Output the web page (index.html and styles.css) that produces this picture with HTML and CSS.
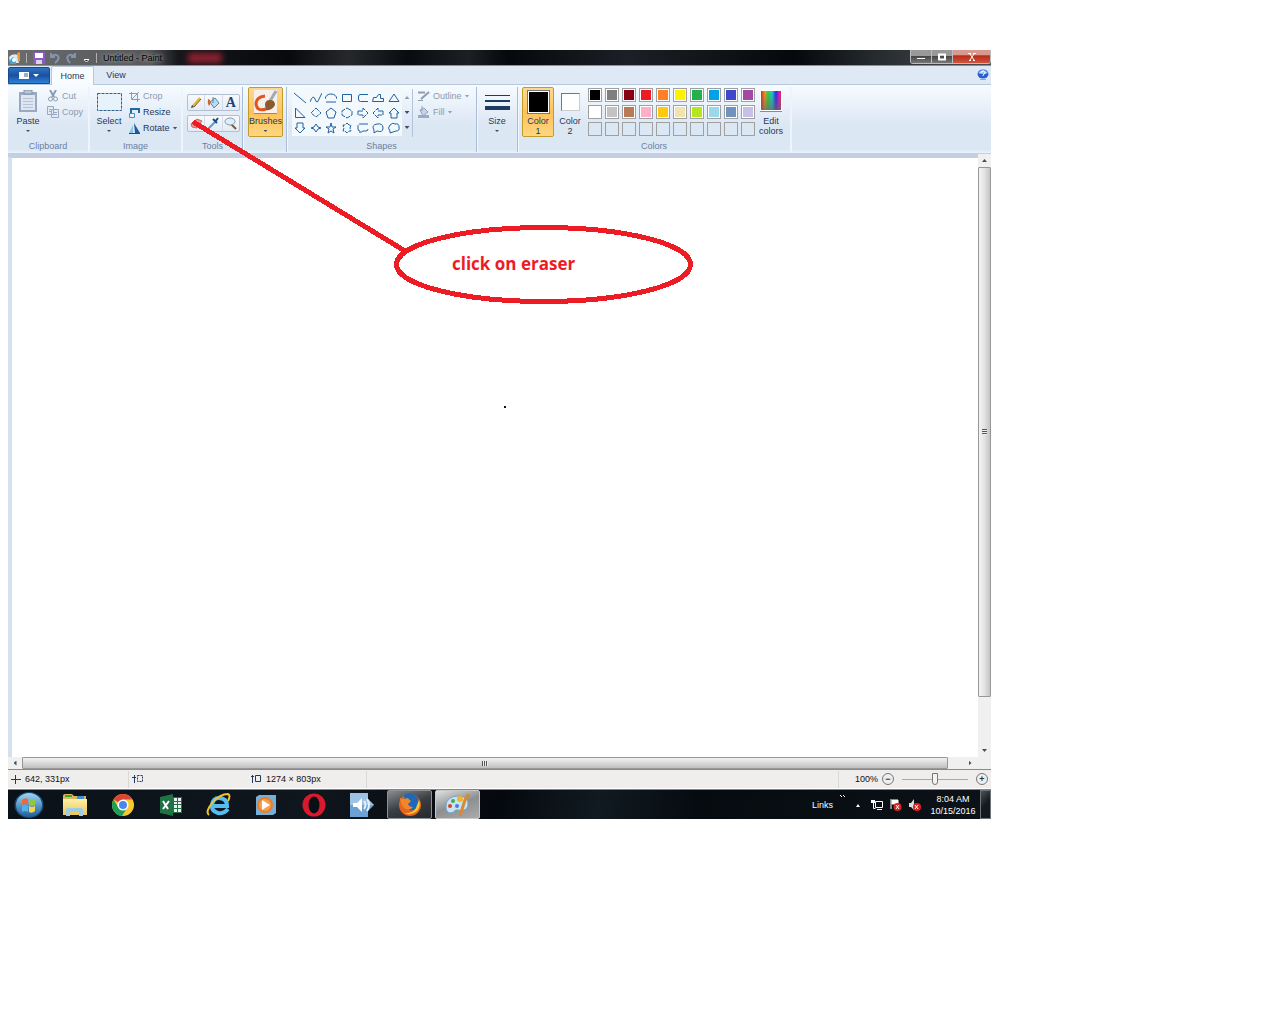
FILE: index.html
```
<!DOCTYPE html>
<html lang="en">
<head>
<meta charset="utf-8">
<title>Untitled - Paint</title>
<link rel="stylesheet" href="styles.css">
</head>
<body>
<svg class="defs" aria-hidden="true">
  <defs>
    <linearGradient id="sky" x1="0" y1="0" x2="0" y2="1"><stop offset="0" stop-color="#9dd4f2"/><stop offset="1" stop-color="#1b5f9e"/></linearGradient>
    <linearGradient id="gold" x1="0" y1="0" x2="0" y2="1"><stop offset="0" stop-color="#fff0a8"/><stop offset="1" stop-color="#e9c65a"/></linearGradient>
    <linearGradient id="rainbow"><stop offset="0" stop-color="#f02020"/><stop offset=".2" stop-color="#e8a020"/><stop offset=".35" stop-color="#30d030"/><stop offset=".55" stop-color="#10d0d8"/><stop offset=".75" stop-color="#3020e8"/><stop offset=".9" stop-color="#e010d0"/><stop offset="1" stop-color="#f02040"/></linearGradient>
    <linearGradient id="fade" x1="0" y1="0" x2="0" y2="1"><stop offset="0" stop-color="#666" stop-opacity="0"/><stop offset="1" stop-color="#666" stop-opacity=".7"/></linearGradient>
  </defs>
</svg>
<main class="window">
  <header class="titlebar">
    <svg class="appicon" width="14" height="14" viewBox="0 0 14 14"><path d="M1 6Q4 2 10 4L11 12H2Z" fill="#d7ecf7"/><path d="M2 9l3-3 3 3v4H2z" fill="#4aa3d8"/><circle cx="6" cy="9" r="2" fill="#fff"/><path d="M9 2l3-1v9l-2 1z" fill="#e99a35"/></svg>
    <span class="rule"></span>
    <button class="qa" aria-label="Save"><svg width="12" height="12" viewBox="0 0 12 12"><path d="M0 0h12v12H0z" fill="#8a5bc0"/><path d="M2 1h8v5H2z" fill="#fff"/><path d="M3 8h6v4H3z" fill="#d9d3ee"/></svg></button>
    <button class="qa" aria-label="Undo"><svg width="12" height="12" viewBox="0 0 12 12"><path d="M2 1v4h4M2 5Q6 1 9 4Q11 7 6 11" fill="none" stroke="#8494b0" stroke-width="2"/></svg></button>
    <button class="qa" aria-label="Redo"><svg width="12" height="12" viewBox="0 0 12 12"><path d="M10 1v4H6M10 5Q6 1 3 4Q1 7 5 11" fill="none" stroke="#8494b0" stroke-width="2"/></svg></button>
    <button class="qa" aria-label="Customize toolbar"><svg width="6" height="12" viewBox="0 0 6 12"><path d="M0 7h5v1L3 10H2L0 8z" fill="#fff"/><path d="M1 8h3L2.500 9.500z" fill="#111"/></svg></button>
    <span class="rule"></span>
    <h1 class="title">Untitled - Paint</h1>
    <span class="reflection"></span>
    <div class="caption">
      <button aria-label="Minimize"><svg width="10" height="8" viewBox="0 0 10 8"><path d="M1 5h8v1H1z" fill="#fff"/></svg></button>
      <button aria-label="Maximize"><svg width="10" height="8" viewBox="0 0 10 8"><path d="M2 1.500h6v5H2z" fill="none" stroke="#fff" stroke-width="2"/></svg></button>
      <button class="close" aria-label="Close"><svg width="10" height="8" viewBox="0 0 10 8"><path d="M3 1l4 6M7 1L3 7M1 .5h3M6 .5h3M2 7.500h2M6 7.500h2" stroke="#fff"/></svg></button>
    </div>
  </header>

  <nav class="tabs">
    <button class="file" aria-label="Paint menu"><svg width="22" height="9" viewBox="0 0 22 9"><path d="M1 1h10v7H1z" fill="#fff"/><path d="M6 3h4M6 5h4" stroke="#2a5fae"/><path d="M15 3h6l-3 3z" fill="#fff"/></svg></button>
    <button class="tab active">Home</button>
    <button class="tab">View</button>
    <button class="help" aria-label="Help"><svg width="12" height="12" viewBox="0 0 12 12"><ellipse cx="6" cy="5" rx="5.500" ry="4.500" fill="#2460d4"/><path d="M1 4Q6-2 11 4Q6 6 1 4" fill="#9cc4f8"/><path d="M4 4Q4 2 6 2T8 4Q8 5 6 6V7" fill="none" stroke="#fff"/><path d="M3 10h6v1H3z" fill="#8fa8d0"/></svg></button>
  </nav>

  <section class="ribbon">
    <div class="group clipboard">
      <div class="tools">
        <button class="big"><span class="pic"><svg width="20" height="24" viewBox="0 0 20 24"><path d="M1 2h18v20H1z" fill="#9aa9c2"/><path d="M3 5h14v15H3z" fill="#dfe6f2"/><path d="M6 0h8v4H6z" fill="#b8c4d8" stroke="#8292ae"/><path d="M5 8.500h10M5 11.500h10M5 14.500h10M5 17.500h10" stroke="#b6c2d8"/></svg></span>Paste<i class="arrow"></i></button>
        <div class="stack">
          <button disabled><svg width="12" height="12" viewBox="0 0 12 12"><path d="M3 0l4 7M9 0L5 7" stroke="#8d9bb2" stroke-width="2"/><circle cx="3.500" cy="9" r="2" fill="none" stroke="#8d9bb2"/><circle cx="8.500" cy="9" r="2" fill="none" stroke="#8d9bb2"/></svg>Cut</button>
          <button disabled><svg width="12" height="12" viewBox="0 0 12 12"><path d="M.5.5h6v8h-6zM4.500 3.500h7v8h-7z" fill="#e4eaf4" stroke="#9aa8c0"/><path d="M6 6.500h4M6 8.500h4M2 3.500h2M2 5.500h2" stroke="#9aa8c0"/></svg>Copy</button>
        </div>
      </div>
      <h2>Clipboard</h2>
    </div>

    <div class="group image">
      <div class="tools">
        <button class="big"><span class="pic"><svg width="25" height="24" viewBox="0 0 25 24"><path d="M.5 3.500h24v17H.5z" fill="#e8f2fb" stroke="#2c5f96" stroke-dasharray="3 1"/></svg></span>Select<i class="arrow"></i></button>
        <div class="stack">
          <button disabled><svg width="11" height="11" viewBox="0 0 11 11"><path d="M2.500 1v7.500H11M0 2.500h8.500V11M3 8l7-7" fill="none" stroke="#8f9cb4"/></svg>Crop</button>
          <button><svg width="11" height="11" viewBox="0 0 11 11"><path d="M2 6V2h8v4" fill="none" stroke="#1d6aa5" stroke-width="2"/><path d="M.5 6.500h5v4h-5z" fill="#e8f4fc" stroke="#3a96cc"/></svg>Resize</button>
          <button><svg width="11" height="11" viewBox="0 0 11 11"><path d="M5 0l6 10H6z" fill="#1c5f9c"/><path d="M4 2v8H0z" fill="#8cc5e8"/><path d="M0 10.500h11" stroke="#19518a"/></svg>Rotate<i class="arrow"></i></button>
        </div>
      </div>
      <h2>Image</h2>
    </div>

    <div class="group toolset">
      <div class="tools">
        <div class="triple">
          <button aria-label="Pencil"><svg width="13" height="13" viewBox="0 0 13 13"><path d="M3 10L10 2" stroke="#e3b12f" stroke-width="2"/><path d="M1 12l1-3 2 2z" fill="#333"/><path d="M4 11l7-8" stroke="#735a28"/></svg></button>
          <button aria-label="Fill with color"><svg width="13" height="13" viewBox="0 0 13 13"><path d="M3 6l5-4 4 5-5 5z" fill="#b9dcf0" stroke="#4f88b2"/><path d="M1 3Q0 7 2 10Q4 8 3 4z" fill="#d6622d"/><path d="M6 7V1" stroke="#6a7c90"/></svg></button>
          <button aria-label="Text"><span class="letter">A</span></button>
        </div>
        <div class="triple">
          <button aria-label="Eraser"><svg width="13" height="13" viewBox="0 0 13 13"><path d="M1 7l6-5 5 2-5 7-5-1z" fill="#ea9696" stroke="#c86a6a"/></svg></button>
          <button aria-label="Color picker"><svg width="13" height="13" viewBox="0 0 13 13"><path d="M1 12l7-7" stroke="#5b9ccc" stroke-width="2"/><path d="M6 2l4 4M8 5l3-4" stroke="#1d4a80" stroke-width="2"/></svg></button>
          <button aria-label="Magnifier"><svg width="13" height="13" viewBox="0 0 13 13"><path d="M7 7l5 5" stroke="#7a5b3c" stroke-width="2"/><ellipse cx="6" cy="4.500" rx="5" ry="3.500" fill="#deeefa" stroke="#8797ad"/></svg></button>
        </div>
      </div>
      <h2>Tools</h2>
    </div>

    <div class="group brush">
      <div class="tools">
        <button class="big chosen"><span class="pic"><svg width="23" height="24" viewBox="0 0 23 24"><path d="M0 0h23v24H0z" fill="#f5f0ec"/><path d="M0 23.500h23" stroke="#a08a60"/><path d="M11 6Q2 7 2 14Q3 22 12 19" fill="none" stroke="#e2541d" stroke-width="3"/><path d="M22 1l-6 10" stroke="#9eabb8" stroke-width="3"/><path d="M11 15q0-5 5-5t5 5q-3 6-9 5z" fill="#8c5a2e"/></svg></span>Brushes<i class="arrow"></i></button>
      </div>
    </div>

    <div class="group shapes">
      <div class="tools">
        <div class="gallery">
          <button aria-label="Line"><svg viewBox="0 0 12 12"><path d="M0 1l12 10"/></svg></button>
          <button aria-label="Curve"><svg viewBox="0 0 12 12"><path d="M0 10Q3 2 5 7T8 9L12 1"/></svg></button>
          <button aria-label="Oval"><svg viewBox="0 0 12 12"><path d="M0 7Q1 2 6 2T12 7M1 10h10"/></svg></button>
          <button aria-label="Rectangle"><svg viewBox="0 0 12 12"><path d="M1.500 2.500h9v7h-9z"/></svg></button>
          <button aria-label="Rounded rectangle"><svg viewBox="0 0 12 12"><path d="M11 2.500H3Q1.500 2.500 1.500 5v2q0 2.500 2 2.500H11"/></svg></button>
          <button aria-label="Polygon"><svg viewBox="0 0 12 12"><path d="M.5 9.500l1-4h3l2-3h2v4h3v3z"/></svg></button>
          <button aria-label="Triangle"><svg viewBox="0 0 12 12"><path d="M6 2l5 7.500H1z"/></svg></button>
          <button aria-label="Right triangle"><svg viewBox="0 0 12 12"><path d="M1.500 1v9.500H11z"/></svg></button>
          <button aria-label="Diamond"><svg viewBox="0 0 12 12"><path d="M6 1l5 5-5 4-5-4z" stroke-dasharray="4 1"/></svg></button>
          <button aria-label="Pentagon"><svg viewBox="0 0 12 12"><path d="M6 1l5 4-2 6H3L1 5z"/></svg></button>
          <button aria-label="Hexagon"><svg viewBox="0 0 12 12"><path d="M6 1l5 3v4l-5 3-5-3V4z" stroke-dasharray="5 1"/></svg></button>
          <button aria-label="Right arrow"><svg viewBox="0 0 12 12"><path d="M1 4h5V1l5 5-5 5V8H1z" stroke-dasharray="5 1"/></svg></button>
          <button aria-label="Left arrow"><svg viewBox="0 0 12 12"><path d="M11 4H6V1L1 6l5 5V8h5z" stroke-dasharray="5 1"/></svg></button>
          <button aria-label="Up arrow"><svg viewBox="0 0 12 12"><path d="M3 11V6H1l5-5 5 5H9v5z"/></svg></button>
          <button aria-label="Down arrow"><svg viewBox="0 0 12 12"><path d="M3 1v5H1l5 5 5-5H9V1z"/></svg></button>
          <button aria-label="Four-point star"><svg viewBox="0 0 12 12"><path d="M6 2l2 3 3 1-3 1-2 3-2-3-3-1 3-1z"/></svg></button>
          <button aria-label="Five-point star"><svg viewBox="0 0 12 12"><path d="M6 1l1 4h4L8 7l1 4-3-2-3 2 1-4-3-2h4z"/></svg></button>
          <button aria-label="Six-point star"><svg viewBox="0 0 12 12"><path d="M6 1l2 2h2L9 6l1 3H8l-2 2-2-2H2l1-3-1-3h2z" stroke-dasharray="4 1"/></svg></button>
          <button aria-label="Rounded callout"><svg viewBox="0 0 12 12"><path d="M11 2H3Q1 2 1 4v3q0 2 2 2v2l3-2h3q2 0 2-2" stroke-dasharray="9 1"/></svg></button>
          <button aria-label="Oval callout"><svg viewBox="0 0 12 12"><path d="M2 8Q-1 3 5 2t6 4-6 3l-3 2z"/></svg></button>
          <button aria-label="Cloud callout"><svg viewBox="0 0 12 12"><path d="M2 9Q-1 6 2 3q3-3 5-1 4-1 4 3 1 4-3 4l-3 1-3 1z"/></svg></button>
        </div>
        <div class="spin">
          <button aria-label="Scroll up"><i class="arrow up"></i></button>
          <button aria-label="Scroll down"><i class="arrow"></i></button>
          <button aria-label="More shapes"><i class="arrow"></i></button>
        </div>
        <div class="stack">
          <button disabled><svg width="12" height="12" viewBox="0 0 12 12"><path d="M0 2.500h7M3 9L11 2" stroke="#8e9bb3" stroke-width="2"/><path d="M0 10.500h5" stroke="#8e9bb3"/></svg>Outline<i class="arrow"></i></button>
          <button disabled><svg width="12" height="12" viewBox="0 0 12 12"><path d="M0 9h11v3H0z" fill="#9aabc9"/><path d="M2 4l4-2 4 4-5 4z" fill="#c8d2e3" stroke="#93a1ba"/><path d="M4 5V0" stroke="#93a1ba"/></svg>Fill<i class="arrow"></i></button>
        </div>
      </div>
      <h2>Shapes</h2>
    </div>

    <div class="group size">
      <div class="tools">
        <button class="big"><span class="pic"><svg width="25" height="24" viewBox="0 0 25 24"><path d="M0 5h25v1H0zM0 10h25v2H0zM0 16h25v4H0z" fill="#1f3b64"/></svg></span>Size<i class="arrow"></i></button>
      </div>
    </div>

    <div class="group colors">
      <div class="tools">
        <button class="big chosen"><span class="pic"><b class="chip black"></b></span>Color<br>1</button>
        <button class="big second"><span class="pic"><b class="chip white"></b></span>Color<br>2</button>
        <div class="palette">
          <button aria-label="Black" style="background:#000000"></button>
          <button aria-label="Gray" style="background:#7f7f7f"></button>
          <button aria-label="Dark red" style="background:#880015"></button>
          <button aria-label="Red" style="background:#ed1c24"></button>
          <button aria-label="Orange" style="background:#ff7f27"></button>
          <button aria-label="Yellow" style="background:#fff200"></button>
          <button aria-label="Green" style="background:#22b14c"></button>
          <button aria-label="Turquoise" style="background:#00a2e8"></button>
          <button aria-label="Indigo" style="background:#3f48cc"></button>
          <button aria-label="Purple" style="background:#a349a4"></button>
          <button aria-label="White" style="background:#ffffff"></button>
          <button aria-label="Light gray" style="background:#c3c3c3"></button>
          <button aria-label="Brown" style="background:#b97a57"></button>
          <button aria-label="Rose" style="background:#ffaec9"></button>
          <button aria-label="Gold" style="background:#ffc90e"></button>
          <button aria-label="Light yellow" style="background:#efe4b0"></button>
          <button aria-label="Lime" style="background:#b5e61d"></button>
          <button aria-label="Light turquoise" style="background:#99d9ea"></button>
          <button aria-label="Blue gray" style="background:#7092be"></button>
          <button aria-label="Lavender" style="background:#c8bfe7"></button>
          <button class="empty" aria-label="Custom 1"></button><button class="empty" aria-label="Custom 2"></button><button class="empty" aria-label="Custom 3"></button><button class="empty" aria-label="Custom 4"></button><button class="empty" aria-label="Custom 5"></button><button class="empty" aria-label="Custom 6"></button><button class="empty" aria-label="Custom 7"></button><button class="empty" aria-label="Custom 8"></button><button class="empty" aria-label="Custom 9"></button><button class="empty" aria-label="Custom 10"></button>
        </div>
        <button class="big"><span class="pic"><svg width="22" height="22" viewBox="0 0 22 22"><path d="M0 0h22v22H0z" fill="#fff"/><path d="M0 21.500h22" stroke="#8a8a8a"/><path d="M1 1h20v19H1z" fill="url(#rainbow)"/><path d="M1 1h20v19H1z" fill="url(#fade)"/></svg></span>Edit<br>colors</button>
      </div>
      <h2>Colors</h2>
    </div>
  </section>

  <section class="workspace">
    <div class="canvas"><span class="dot"></span></div>
    <div class="vscroll">
      <button aria-label="Scroll up"><i class="arrow up"></i></button>
      <div class="thumb"></div>
      <button aria-label="Scroll down"><i class="arrow"></i></button>
    </div>
    <div class="hscroll">
      <button aria-label="Scroll left"><i class="arrow left"></i></button>
      <div class="thumb"></div>
      <button aria-label="Scroll right"><i class="arrow right"></i></button>
    </div>
    <div class="corner"></div>
  </section>

  <footer class="status">
    <span class="cell"><svg width="10" height="10" viewBox="0 0 10 10"><path d="M0 5.500h10M4.500 1v9" stroke="#1f3b64"/></svg>642, 331px</span>
    <span class="cell"><svg width="11" height="10" viewBox="0 0 11 10"><path d="M2.500 1v8M0 3.500h4" stroke="#1f3b64"/><path d="M5.500 1.500h5v6h-5z" fill="none" stroke="#1f3b64" stroke-dasharray="2 1"/></svg></span>
    <span class="cell"><svg width="11" height="10" viewBox="0 0 11 10"><path d="M1.500 1v8M0 2.500h3" stroke="#1f3b64"/><path d="M4.500 1.500h5v6h-5z" fill="none" stroke="#1f3b64"/></svg>1274 × 803px</span>
    <label class="zoom" for="zoom">100%</label>
    <button class="round" aria-label="Zoom out">−</button>
    <input id="zoom" type="range" min="0" max="100" value="50">
    <button class="round plus" aria-label="Zoom in">+</button>
  </footer>

  <nav class="taskbar">
    <button class="start" aria-label="Start"><svg width="30" height="28" viewBox="0 0 30 28"><ellipse cx="15" cy="14" rx="14.500" ry="13" fill="#184a78"/><ellipse cx="15" cy="14" rx="13" ry="12" fill="url(#sky)"/><path d="M8 9q3-3 6-1v6q-3-2-6 0z" fill="#f0693a"/><path d="M15 8q3 2 7 0l-1 6q-3 2-6 0z" fill="#93c83e"/><path d="M8 15q3-2 6 0v6q-3-2-6 0z" fill="#4fb3ea"/><path d="M15 15q3 2 6 0v5q-3 3-6 1z" fill="#fbd34a"/></svg></button>
    <div class="apps">
      <button aria-label="Explorer"><svg width="26" height="24" viewBox="0 0 26 24"><path d="M1 3q0-2 2-2h7l2 2h12v19H1z" fill="#d8b75e"/><path d="M3 2h7v2H3z" fill="#3aa635"/><path d="M15 3h7v3h-7z" fill="#3d8fd8"/><path d="M1 6h24v16H1z" fill="url(#gold)"/><path d="M4 23v-6q0-2 2-2h13q2 0 2 2v6h-4v-4H8v4z" fill="#9ccce8"/></svg></button>
      <button aria-label="Chrome"><svg width="24" height="24" viewBox="0 0 24 24"><circle cx="12" cy="12" r="11" fill="#f7c92e"/><path d="M12 12L2.500 6.500A11 11 0 0 1 21.500 6.500H12z" fill="#db4437"/><path d="M2.500 6.500A11 11 0 0 0 11 23L16 15 7 14z" fill="#1c9f57"/><circle cx="12" cy="12" r="5.500" fill="#fff"/><circle cx="12" cy="12" r="4" fill="#4a84ee"/></svg></button>
      <button aria-label="Excel"><svg width="24" height="22" viewBox="0 0 24 22"><path d="M13 3h10v16H13z" fill="#1f7244"/><path d="M15 4h3v3h-3zM19 4h3v3h-3zM15 8h3v2h-3zM19 8h3v2h-3zM15 11h3v3h-3zM19 11h3v3h-3zM15 15h3v3h-3zM19 15h3v3h-3z" fill="#e8f1eb"/><path d="M1 3l13-3v22L1 19z" fill="#1f7244"/><path d="M4 7l5 8M10 7l-6 8" stroke="#fff" stroke-width="2"/></svg></button>
      <button aria-label="Internet Explorer"><svg width="26" height="24" viewBox="0 0 26 24"><path d="M22 16Q18 21 12 20Q5 18 6 12Q7 5 13 5Q21 5 21 13H8" fill="none" stroke="#55bdf0" stroke-width="4"/><path d="M3 22Q-1 19 6 10Q14 1 22 1Q25 2 22 8" fill="none" stroke="#f0c22b" stroke-width="2"/></svg></button>
      <button aria-label="Media Player"><svg width="22" height="22" viewBox="0 0 22 22"><path d="M1 3l3-2h17v18l-3 2H1z" fill="#74b0d8"/><circle cx="10" cy="11" r="8" fill="#ee7c25"/><circle cx="10" cy="11" r="6" fill="#f5a04e"/><path d="M7 6l8 5-8 5z" fill="#fff"/></svg></button>
      <button aria-label="Opera"><svg width="24" height="24" viewBox="0 0 24 24"><ellipse cx="12" cy="12" rx="11.500" ry="11.500" fill="#d9192c"/><ellipse cx="12" cy="12" rx="5.500" ry="8.500" fill="#0a0e15"/></svg></button>
      <button aria-label="Volume"><svg width="26" height="24" viewBox="0 0 26 24"><path d="M1 0h18v6l6 6-6 6v6H1z" fill="#6ca1d4"/><path d="M1 0h18v6l6 6H1z" fill="#9cc2e5"/><path d="M4 10h4l5-5v14l-5-5H4z" fill="#fff"/><path d="M15 8q3 4 0 8M18 6q4 6 0 12" fill="none" stroke="#e7f1fb" stroke-width="2"/></svg></button>
      <button class="open" aria-label="Firefox"><svg width="24" height="24" viewBox="0 0 24 24"><circle cx="12" cy="12" r="11" fill="#e8641b"/><path d="M6 2Q14-2 20 5Q23 13 16 17Q8 19 7 11z" fill="#1f68b8"/><path d="M2 5l4 1 4-1q1 2 3 3l-3 3q1 3 5 3-3 4-7 2-5-2-6-11z" fill="#f0862a"/><path d="M21 7q2 6-2 11-6 5-13 2 9 1 12-5z" fill="#fbc936"/></svg></button>
      <button class="open current" aria-label="Paint"><svg width="26" height="24" viewBox="0 0 26 24"><path d="M1 15Q0 3 14 3Q24 4 23 12Q22 19 13 17Q10 16 9 19Q2 22 1 15z" fill="#c8e3f3" stroke="#6fa6c9"/><circle cx="5" cy="13" r="2" fill="#d94136"/><circle cx="8" cy="8" r="2" fill="#4aa84e"/><circle cx="15" cy="6" r="3" fill="#f0b52a"/><circle cx="12" cy="13" r="2" fill="#4c7edb"/><path d="M24 1l-4 6-5 16" fill="none" stroke="#d68a35" stroke-width="3"/></svg></button>
    </div>
    <div class="tray">
      <a class="links" href="#links">Links</a>
      <svg class="chev" width="6" height="24" viewBox="0 0 6 24"><path d="M0 2l2 2M3 2l2 2" stroke="#fff"/></svg>
      <button aria-label="Show hidden icons"><svg width="6" height="12" viewBox="0 0 6 12"><path d="M1 8h4L3 5z" fill="#fff"/></svg></button>
      <button aria-label="Network"><svg width="12" height="12" viewBox="0 0 12 12"><path d="M4.500 2.500h7v6h-7zM6 10.500h5M2.500 1v8.500h2" fill="none" stroke="#fff"/><path d="M0 1h4v3H0z" fill="#fff"/></svg></button>
      <button aria-label="Action Center"><svg width="12" height="12" viewBox="0 0 12 12"><path d="M1 0v10M2 1h6v4H2z" fill="#fff" stroke="#fff"/><circle cx="7.500" cy="8" r="4" fill="#d9221f"/><path d="M6 6l3 4M9 6l-3 4" stroke="#fff"/></svg></button>
      <button aria-label="Sound muted"><svg width="12" height="12" viewBox="0 0 12 12"><path d="M0 4h2l3-4v11L2 8H0z" fill="#ddd"/><circle cx="8" cy="8" r="4" fill="#d9221f"/><path d="M6 6l3 4M9 6l-3 4" stroke="#fff"/></svg></button>
      <time class="clock" datetime="2016-10-15T08:04">8:04 AM<br>10/15/2016</time>
      <button class="desktop" aria-label="Show desktop"></button>
    </div>
  </nav>

  <aside class="callout">
    <svg width="690" height="260" viewBox="0 0 690 260" aria-hidden="true"><path d="M187 73L397 201"/><ellipse cx="535.500" cy="214.500" rx="147" ry="37"/></svg>
    <p>click on eraser</p>
  </aside>
</main>
</body>
</html>
```
FILE: styles.css
```
* { box-sizing: border-box; }
body {
  margin: 0;
  padding: 50px 289px 0 8px;
  background: #fff;
  color: #1e395b;
  font: 9px/10px "Liberation Sans", Arial, sans-serif;
}
button {
  margin: 0;
  padding: 0;
  border: 0;
  background: none;
  color: inherit;
  font: inherit;
}
h1, h2, p { margin: 0; font: inherit; }
svg { display: block; flex: none; }
.defs { position: absolute; width: 0; height: 0; }

.window {
  position: relative;
  display: flex;
  flex-direction: column;
  min-width: 800px;
  min-height: calc(75vh + 1px);
}

/* title bar */
.titlebar {
  display: flex;
  align-items: center;
  height: 16px;
  overflow: hidden;
  background: linear-gradient(90deg, #6c6c6c 0, #55575a 140px, #15171b 170px, #07090d 280px, #26282b 340px, #080b10 400px, #1c2024 460px, #05080c 500px, #1c2026 620px, #05080c 80%, #252a2e 88%, #4a4d50 100%);
  border-bottom: 1px solid #8b9199;
}
.rule { width: 1px; height: 10px; background: #b0b0b0; }
.rule:first-of-type { margin: 0 5px 0 4px; }
.qa { display: grid; place-items: center; width: 14px; margin-right: 2px; }
.title { margin: 0 26px 0 6px; color: #000; text-shadow: 0 0 4px #bbb, 0 0 6px #999; }
.reflection { width: 34px; height: 10px; background: #8e2230; filter: blur(3px); }
.caption { display: flex; align-self: flex-start; margin-left: auto; height: 14px; border: 1px solid #b9bcc0; border-top: 0; border-radius: 0 0 3px 3px; overflow: hidden; }
.caption button { display: grid; place-items: center; width: 21px; background: linear-gradient(#999 0 45%, #444 46%, #777); border-right: 1px solid #b9bcc0; }
.caption .close { width: 37px; border: 0; background: linear-gradient(#d89a90 0 35%, #b92c18 45%, #d0533c); }

/* tabs */
.tabs { display: flex; align-items: flex-end; height: 19px; background: #dfe9f5; border-bottom: 1px solid #b8c8dd; }
.file { display: grid; place-items: center; width: 42px; height: 17px; border: 1px solid #174a8c; border-radius: 2px 2px 0 0; background: linear-gradient(#2c73c4, #1c50a0 50%, #2c83d6); }
.tab { width: 44px; height: 18px; }
.tab.active { position: relative; width: 43px; margin: 0 0 -1px 1px; height: 19px; border: 1px solid #b8c8dd; border-bottom: 0; border-radius: 2px 2px 0 0; background: #f8fcff; }
.help { align-self: center; margin: 0 2px 0 auto; }

/* ribbon */
.ribbon { display: flex; height: 68px; padding: 2px 0 1px; background: linear-gradient(#f6fbff, #dce7f4 60%, #dce7f4 95%, #e8f4ff); }
.group { display: flex; flex-direction: column; flex: none; border-right: 2px solid #eef4fb; }
.group h2 { margin-top: auto; padding-bottom: 1px; color: #6a7f9f; text-align: center; }
.tools { display: flex; height: 50px; }
.clipboard { width: 82px; }
.image { width: 93px; }
.toolset { width: 60px; }
.brush { width: 44px; }
.shapes { width: 190px; }
.size { width: 41px; }
.colors { width: 274px; }
.toolset, .brush, .shapes, .size { border-right: 1px solid #a9bbd5; box-shadow: 1px 0 #f3f8fd; }
.big { display: flex; flex-direction: column; align-items: center; width: 32px; height: 50px; padding-top: 3px; text-align: center; }
.pic { display: grid; place-items: start center; height: 26px; }
.chosen { border: 1px solid #c29b29; border-radius: 2px; padding-top: 2px; background: linear-gradient(#fbd893, #fdc85f 45%, #fdbf57 46%, #ffd780); }
.arrow { display: block; width: 5px; height: 3px; margin: 0 auto; background: #3c4f6e; clip-path: polygon(0 0, 100% 0, 50% 100%); }
.big .arrow { margin-top: 4px; width: 4px; height: 2px; }
.arrow.up { clip-path: polygon(0 100%, 100% 100%, 50% 0); }
.arrow.left { width: 3px; height: 5px; clip-path: polygon(0 50%, 100% 0, 100% 100%); }
.arrow.right { width: 3px; height: 5px; clip-path: polygon(100% 50%, 0 0, 0 100%); }
.stack { display: flex; flex-direction: column; align-items: flex-start; padding-top: 1px; }
.stack button { display: flex; align-items: center; gap: 3px; height: 16px; white-space: nowrap; }
.stack button:disabled { color: #8d99ad; }
.stack button:disabled .arrow { opacity: .5; }
.clipboard .big { margin-left: 4px; }
.clipboard .stack { margin-left: 3px; }
.image .big { margin-left: 3px; }
.image .stack { margin-left: 4px; }

.toolset .tools { flex-direction: column; gap: 4px; padding: 7px 0 0 4px; }
.triple { display: flex; width: 53px; height: 17px; border: 1px solid #b3bfd2; border-radius: 2px; background: linear-gradient(#f7fafd, #e4ebf5); }
.triple button { display: grid; place-items: center; flex: 1; border-left: 1px solid #d4dcea; }
.triple button:first-child { border: 0; }
.letter { color: #22426f; font: bold 14px/14px "Liberation Serif", serif; }
.brush .big { width: 35px; margin-left: 5px; }

.gallery { display: grid; grid-template: repeat(3, 15px) / repeat(7, 1fr); place-items: center; width: 110px; height: 47px; padding-top: 1px; margin: 2px 0 0 5px; background: #f3f8fd; }
.gallery svg { width: 12px; height: 12px; fill: none; stroke: #1f62a2; stroke-width: 1; }
.spin { display: grid; grid-template-rows: repeat(3, 15px); width: 11px; margin-top: 2px; padding-top: 1px; border-right: 1px solid #b3c3da; align-items: center; }
.spin button:first-child { opacity: .5; }
.shapes .stack { margin-left: 5px; }
.size .big { margin-left: 4px; }

.chip { display: block; width: 23px; height: 24px; border: 1px solid #777; }
.chip.black { background: #000; box-shadow: inset 0 0 0 1px #fff; }
.chip.white { width: 19px; height: 18px; margin-top: 3px; background: #fff; border-right-color: #ccc; border-bottom-color: #ccc; }
.colors .chosen { margin-left: 4px; }
.colors .second { margin-right: 2px; }
.palette { display: grid; grid-template-columns: repeat(10, 14px); grid-auto-rows: 14px; gap: 3px; width: 167px; padding: 1px 0 0; }
.palette button { border: 1px solid #a0a0a0; box-shadow: inset 0 0 0 1px #fff; }
.palette .empty { background: #dce7f4; box-shadow: none; }

/* drawing area and scroll bars */
.workspace { display: grid; grid-template: 1fr 12px / 1fr 13px; flex: 1; padding-top: 4px; background: #c5cfe1; }
.canvas { background: #fff; border-left: 4px solid #d6e0ef; border-top: 1px solid #c5cfe1; }
.dot { display: block; width: 2px; height: 2px; margin: 248px 0 0 492px; background: #111; }
.vscroll, .hscroll { display: flex; background: #f0f0f0; }
.vscroll { flex-direction: column; margin-top: -3px; }
.vscroll button { height: 13px; }
.vscroll .thumb { flex: 0 1 530px; margin-bottom: auto; background: linear-gradient(90deg, #f4f4f4, #e2e2e2 50%, #c4c4c8); border: 1px solid #979797; border-radius: 1px; display: grid; place-items: center; }
.vscroll .thumb::after { content: ""; width: 5px; height: 6px; background: repeating-linear-gradient(#555 0 1px, #eee 1px 2px); }
.hscroll button { width: 14px; }
.hscroll .thumb { flex: 1; border: 1px solid #979797; border-radius: 1px; background: linear-gradient(#f2f2f2, #d9d9d9 50%, #bfbfc3); display: grid; place-items: center; }
.hscroll .thumb::after { content: ""; width: 6px; height: 5px; background: repeating-linear-gradient(90deg, #555 0 1px, #eee 1px 2px); }
.hscroll button:last-child { width: 16px; margin-left: 14px; }
.corner { background: #f0f0f0; }

/* status bar */
.status { display: flex; align-items: center; height: 20px; padding: 0 3px 0 2px; border-top: 1px solid #8a8a8a; border-bottom: 1px solid #fff; background: #f0eded; color: #111; }
.cell { display: flex; align-items: center; gap: 4px; width: 119px; height: 17px; padding-left: 1px; border-right: 1px solid #d8d8d8; }
.cell + .cell { padding-left: 3px; border-color: transparent; }
.cell + .cell + .cell { border-color: #d8d8d8; }
.zoom { display: flex; align-items: center; justify-content: flex-end; margin-left: auto; width: 44px; height: 17px; padding-right: 4px; border-left: 1px solid #d8d8d8; }
.round { width: 12px; height: 12px; border: 1px solid #777; border-radius: 50%; background: #eee; color: #333; font-weight: bold; line-height: 8px; text-align: center; }
.status input { appearance: none; width: 66px; height: 12px; margin: 0 8px; background: linear-gradient(#aaa, #aaa) center / 100% 1px no-repeat; }
.status input::-webkit-slider-thumb { appearance: none; width: 6px; height: 12px; border: 1px solid #777; border-radius: 0 0 3px 3px; background: #f4f4f4; }

/* taskbar */
.taskbar { display: flex; align-items: stretch; height: 30px; border-top: 1px solid #79868c; background: linear-gradient(100deg, #0a1118, #10161d 30%, #05090e 50%, #111a21 60%, #060b10 70%, #0c1217 100%); color: #fff; }
.start { display: grid; place-items: center; width: 42px; }
.apps { display: grid; grid-template-columns: repeat(9, 1fr); gap: 3px; width: 427px; margin-left: 3px; }
.apps button { display: grid; place-items: center; }
.apps .open { border: 1px solid #8e9194; border-radius: 2px; background: linear-gradient(160deg, #8a8d90, #3a3d41 50%, #25282c); }
.apps .current { background: linear-gradient(160deg, #e0e0e0, #8c8e90 50%, #a9abad); border-color: #c8c8c8; }
.tray { display: flex; align-items: center; margin-left: auto; }
.tray button { margin-right: 7px; }
.links { color: #fff; text-decoration: none; }
.links + .chev { margin: 0 9px 0 7px; }
.tray .chev + button { margin-right: 10px; }
.clock { width: 46px; margin-left: 2px; text-align: center; line-height: 12px; }
.tray .desktop { align-self: stretch; width: 11px; margin: 0 0 0 4px; border: 1px solid #6d7377; background: linear-gradient(135deg, #4c5256, #14191d 50%); }

/* annotation drawn over the picture */
.callout { position: absolute; top: 0; left: 0; color: #ed1c24; pointer-events: none; }
.callout svg { fill: none; stroke: currentColor; stroke-width: 5; stroke-linecap: round; shape-rendering: crispEdges; }
.callout p { position: absolute; top: 204px; left: 444px; font: bold 17px/20px "Open Sans", "Noto Sans", sans-serif; white-space: nowrap; }
```
